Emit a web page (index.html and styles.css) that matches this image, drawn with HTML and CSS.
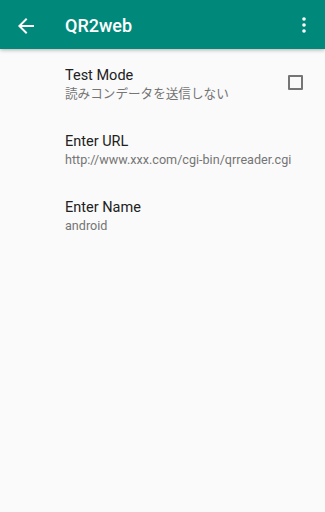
FILE: index.html
```html
<!DOCTYPE html>
<html lang="ja">
<head>
    <meta charset="UTF-8">
    <meta name="viewport" content="width=device-width, initial-scale=1.0">
    <title>QR2web</title>
    <link rel="stylesheet" href="styles.css">
</head>
<body>
    <div class="app-bar">
        <button class="nav-btn" aria-label="back">
            <svg width="16" height="16" viewBox="0 0 16 16">
                <path d="M16 7H3.8l5.6-5.6L8 0 0 8l8 8 1.4-1.4L3.8 9H16z" fill="#fff"/>
            </svg>
        </button>
        <h1 class="title">QR2web</h1>
        <button class="menu-btn" aria-label="menu">
            <svg width="4" height="16" viewBox="0 0 4 16">
                <circle cx="2" cy="2" r="1.8" fill="#fff"/>
                <circle cx="2" cy="8" r="1.8" fill="#fff"/>
                <circle cx="2" cy="14" r="1.8" fill="#fff"/>
            </svg>
        </button>
    </div>

    <div class="pref-list">
        <div class="pref-item">
            <div class="pref-text">
                <div class="pref-title">Test Mode</div>
                <div class="pref-summary">読みコンデータを送信しない</div>
            </div>
            <span class="checkbox"></span>
        </div>
        <div class="pref-item">
            <div class="pref-text">
                <div class="pref-title">Enter URL</div>
                <div class="pref-summary">http://www.xxx.com/cgi-bin/qrreader.cgi</div>
            </div>
        </div>
        <div class="pref-item">
            <div class="pref-text">
                <div class="pref-title">Enter Name</div>
                <div class="pref-summary">android</div>
            </div>
        </div>
    </div>
</body>
</html>
```

FILE: styles.css
```css
body {
    margin: 0;
    background: #fafafa;
    font-family: Roboto, "Noto Sans CJK JP", sans-serif;
    width: 325px;
    height: 512px;
    overflow: hidden;
}

.app-bar {
    height: 49px;
    background: #00897b;
    display: flex;
    align-items: center;
    box-shadow: 0 1px 4px rgba(0, 0, 0, 0.3);
    position: relative;
}

.nav-btn,
.menu-btn {
    background: none;
    border: none;
    padding: 0;
    display: flex;
    align-items: center;
    justify-content: center;
}

.nav-btn {
    width: 16px;
    margin-left: 18px;
    margin-top: 2px;
}

.title {
    margin: 1px 0 0 31px;
    color: #fff;
    font-size: 18px;
    font-weight: 500;
    flex: 1;
}

.menu-btn {
    width: 4px;
    margin-right: 19px;
    margin-top: 1px;
}

.pref-list {
    padding-left: 65px;
    padding-top: 2px;
}

.pref-item {
    display: flex;
    align-items: center;
    height: 66px;
}

.pref-text {
    flex: 1;
}

.pref-title {
    font-size: 14.5px;
    color: #212121;
    line-height: 19px;
}

.pref-summary {
    font-size: 12.6px;
    color: #757575;
    line-height: 17px;
}

.checkbox {
    width: 11px;
    height: 11px;
    border: 2px solid #757575;
    border-radius: 1px;
    margin: -4px 22px 0 0;
}
```
